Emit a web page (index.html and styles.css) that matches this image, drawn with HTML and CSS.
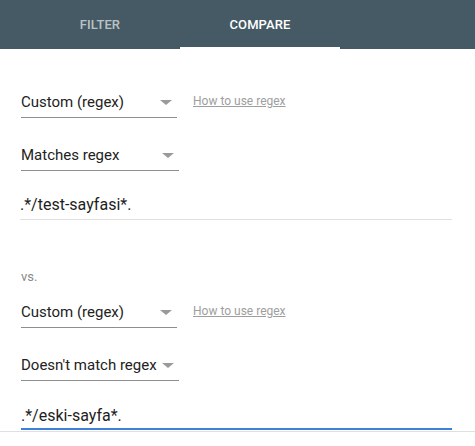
FILE: index.html
```html
<!DOCTYPE html>
<html>
<head>
<meta charset="utf-8">
<link rel="stylesheet" href="styles.css">
</head>
<body>
<div class="tabs">
  <div class="tab">FILTER</div>
  <div class="tab active">COMPARE</div>
</div>
<div class="main">
  <div class="row first">
    <div class="select w156"><span>Custom (regex)</span><i class="caret"></i></div>
    <a class="help">How to use regex</a>
  </div>
  <div class="row gap">
    <div class="select w158"><span>Matches regex</span><i class="caret"></i></div>
  </div>
  <div class="input">.*/test-sayfasi*.</div>
  <div class="vs">vs.</div>
  <div class="row vsgap">
    <div class="select w156"><span>Custom (regex)</span><i class="caret"></i></div>
    <a class="help">How to use regex</a>
  </div>
  <div class="row gap">
    <div class="select w158"><span>Doesn't match regex</span><i class="caret"></i></div>
  </div>
  <div class="input focused">.*/eski-sayfa*.</div>
</div>
<div class="rule"></div>
</body>
</html>
```

FILE: styles.css
```css
html, body {
  margin: 0;
  padding: 0;
  background: #ffffff;
  font-family: Roboto, "Liberation Sans", Arial, sans-serif;
}
.tabs {
  display: flex;
  height: 49px;
  background: #455a64;
  padding-left: 20px;
}
.tab {
  width: 160px;
  box-sizing: border-box;
  height: 49px;
  display: flex;
  align-items: center;
  justify-content: center;
  padding-top: 1px;
  border-bottom: 2px solid transparent;
  font-size: 13px;
  font-weight: 500;
  color: rgba(255, 255, 255, 0.65);
  letter-spacing: 0.1px;
}
.tab.active {
  color: #ffffff;
  border-bottom-color: #ffffff;
}
.main {
  padding-left: 21px;
  display: flex;
  flex-direction: column;
  align-items: flex-start;
}
.row {
  display: flex;
  align-items: flex-start;
}
.row.first { margin-top: 43px; }
.row.gap { margin-top: 27px; }
.row.vsgap { margin-top: 17px; }
.select {
  display: flex;
  align-items: center;
  justify-content: space-between;
  box-sizing: border-box;
  padding-right: 5px;
  padding-bottom: 5px;
  border-bottom: 1px solid #8e8e8e;
  font-size: 15px;
  line-height: 20px;
  color: #222222;
}
.w156 { width: 156px; }
.w158 { width: 158px; }
.caret {
  width: 0;
  height: 0;
  border-left: 6px solid transparent;
  border-right: 6px solid transparent;
  border-top: 5px solid #9a9a9a;
  margin-top: 1px;
}
.help {
  margin-left: 16px;
  margin-top: 2px;
  font-size: 12px;
  line-height: 14px;
  color: #9e9e9e;
  text-decoration: underline;
}
.input {
  margin-top: 24px;
  width: 432px;
  box-sizing: border-box;
  font-size: 16px;
  line-height: 20px;
  color: #1e1e1e;
  padding-bottom: 4px;
  border-bottom: 1px solid #e0e0e0;
  margin-left: -1px;
}
.input.focused {
  margin-top: 25px;
  padding-bottom: 2px;
  border-bottom: 2px solid #3f7fdc;
  margin-left: 0;
  width: 431px;
}
.vs {
  margin-top: 49px;
  font-size: 13px;
  line-height: 16px;
  color: #8a8a8a;
}
.rule {
  margin-top: 1px;
  border-top: 1px solid #e0e0e0;
}
```
